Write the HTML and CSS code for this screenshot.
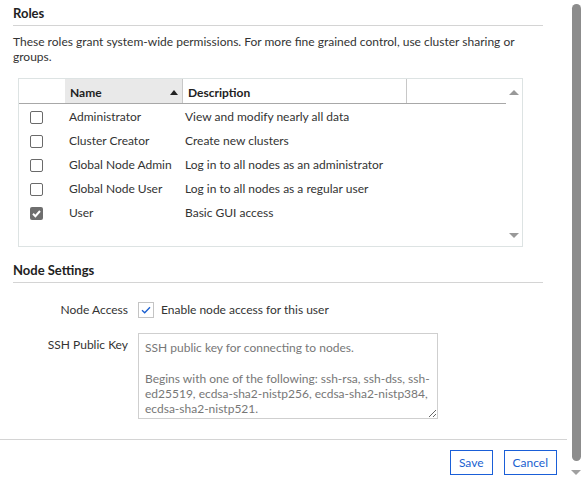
FILE: index.html
```html
<!DOCTYPE html>
<html>
<head>
<meta charset="utf-8">
<link rel="stylesheet" href="styles.css">
</head>
<body>
<div class="page">
  <h2 class="section-title">Roles</h2>
  <p class="desc">These roles grant system-wide permissions. For more fine grained control, use cluster sharing or groups.</p>
  <div class="grid">
    <div class="grid-main">
      <div class="grid-head">
        <div class="col-check"></div>
        <div class="col-name sorted"><span>Name</span><span class="sort-up"></span></div>
        <div class="col-desc">Description</div>
        <div class="col-extra"></div>
      </div>
      <div class="grid-body">
        <div class="grid-row"><div class="col-check"><span class="cb"></span></div><div class="col-name">Administrator</div><div class="col-desc">View and modify nearly all data</div></div>
        <div class="grid-row"><div class="col-check"><span class="cb"></span></div><div class="col-name">Cluster Creator</div><div class="col-desc">Create new clusters</div></div>
        <div class="grid-row"><div class="col-check"><span class="cb"></span></div><div class="col-name">Global Node Admin</div><div class="col-desc">Log in to all nodes as an administrator</div></div>
        <div class="grid-row"><div class="col-check"><span class="cb"></span></div><div class="col-name">Global Node User</div><div class="col-desc">Log in to all nodes as a regular user</div></div>
        <div class="grid-row"><div class="col-check"><span class="cb cb-checked"><svg viewBox="0 0 13 13" width="13" height="13"><path d="M3 6.8 L5.4 9.2 L10 4" fill="none" stroke="#fff" stroke-width="2"/></svg></span></div><div class="col-name">User</div><div class="col-desc">Basic GUI access</div></div>
      </div>
    </div>
    <div class="grid-scroll">
      <span class="tri-up"></span>
      <span class="tri-down"></span>
    </div>
  </div>

  <h2 class="section-title section-second">Node Settings</h2>
  <div class="form-row row-access">
    <label class="form-label">Node Access</label>
    <div class="form-field">
      <span class="cb-big"><svg viewBox="0 0 16 16" width="16" height="16"><path d="M4 8.2 L6.7 10.8 L12 5.2" fill="none" stroke="#1a5fd0" stroke-width="1.3"/></svg></span>
      <span class="cb-text">Enable node access for this user</span>
    </div>
  </div>
  <div class="form-row row-ssh">
    <label class="form-label label-top">SSH Public Key</label>
    <textarea class="ssh" placeholder="SSH public key for connecting to nodes.&#10;&#10;Begins with one of the following: ssh-rsa, ssh-dss, ssh-ed25519, ecdsa-sha2-nistp256, ecdsa-sha2-nistp384, ecdsa-sha2-nistp521."></textarea>
  </div>
  <div class="footer">
    <button class="btn">Save</button>
    <button class="btn">Cancel</button>
  </div>
</div>
<div class="vscroll">
  <div class="vthumb"></div>
  <span class="vtri-down"></span>
</div>
</body>
</html>
```
FILE: styles.css
```css
html, body {
  margin: 0;
  padding: 0;
  background: #fff;
}
body {
  display: flex;
  width: 581px;
  height: 486px;
  overflow: hidden;
  font-family: "Lato", "Segoe UI", sans-serif;
  font-size: 12px;
  color: #333;
}
.page {
  width: 571px;
  flex: none;
}
.section-title {
  margin: 0 28px 0 13px;
  padding: 5px 0 4px;
  font-size: 13px;
  line-height: 16px;
  font-weight: bold;
  color: #222;
  border-bottom: 1px solid #d4d4d4;
}
.section-second {
  margin-top: 10px;
}
.desc {
  margin: 8px 28px 0 13px;
  line-height: 15px;
}
.grid {
  margin: 14px 0 0 18px;
  width: 503px;
  height: 167px;
  border: 1px solid #dde3e3;
  display: flex;
}
.grid-main {
  flex: 1;
}
.grid-head {
  display: flex;
  height: 24px;
  border-bottom: 1px solid #a8a8a8;
  font-weight: bold;
  color: #222;
}
.grid-head > div {
  padding-top: 6px;
  line-height: 16px;
  box-sizing: border-box;
}
.col-check {
  width: 46px;
  flex: none;
}
.col-name {
  width: 117px;
  flex: none;
  padding-left: 5px;
  box-sizing: border-box;
}
.col-desc {
  width: 224px;
  flex: none;
  padding-left: 3px;
  box-sizing: border-box;
}
.grid-head .col-desc {
  border-left: 1px solid #c8c8c8;
  padding-left: 5px;
}
.col-extra {
  flex: 1;
  border-left: 1px solid #c8c8c8;
}
.grid-head .col-name {
  background: #e9e9e9;
  display: flex;
  justify-content: space-between;
  padding-right: 4px;
}
.sort-up {
  width: 0;
  height: 0;
  margin-top: 5px;
  border-left: 4px solid transparent;
  border-right: 4px solid transparent;
  border-bottom: 5px solid #222;
}
.grid-body {
  padding-top: 1px;
}
.grid-row {
  display: flex;
  height: 24px;
  line-height: 24px;
}
.grid-row .col-name {
  padding-left: 4px;
}
.grid-row .col-check {
  display: flex;
  align-items: center;
  padding-left: 11px;
  box-sizing: border-box;
}
.cb {
  width: 11px;
  height: 11px;
  border: 1px solid #6a6a6a;
  border-radius: 2px;
  background: #fff;
  display: block;
}
.cb-checked {
  width: 13px;
  height: 13px;
  border: none;
  background: #6e6e6e;
}
.cb-checked svg {
  display: block;
}
.grid-scroll {
  width: 16px;
  flex: none;
  display: flex;
  flex-direction: column;
  justify-content: space-between;
  align-items: center;
  padding: 11px 0 8px;
  box-sizing: border-box;
}
.tri-up {
  width: 0;
  height: 0;
  border-left: 5px solid transparent;
  border-right: 5px solid transparent;
  border-bottom: 5px solid #999;
}
.tri-down {
  width: 0;
  height: 0;
  border-left: 5px solid transparent;
  border-right: 5px solid transparent;
  border-top: 5px solid #999;
}
.form-row {
  display: flex;
  align-items: flex-start;
}
.row-access {
  margin-top: 19px;
  height: 16px;
  align-items: center;
}
.row-ssh {
  margin-top: 15px;
}
.form-label {
  width: 128px;
  flex: none;
  padding-right: 10px;
  text-align: right;
  line-height: 16px;
  box-sizing: content-box;
}
.label-top {
  padding-top: 4px;
}
.form-field {
  display: flex;
  align-items: center;
}
.cb-big {
  width: 14px;
  height: 14px;
  border: 1px solid #c4c4c4;
  display: block;
}
.cb-big svg {
  display: block;
  margin: -1px 0 0 -1px;
}
.cb-text {
  margin-left: 7px;
  line-height: 16px;
}
.ssh {
  display: block;
  width: 300px;
  height: 86px;
  box-sizing: border-box;
  border: 1px solid #cfcfcf;
  border-radius: 0;
  padding: 6px 6px;
  margin: 0;
  font-family: inherit;
  font-size: 12px;
  line-height: 15.3px;
  color: #333;
  resize: both;
  outline: none;
}
.ssh::placeholder {
  color: #777;
  opacity: 1;
}
.footer {
  margin: 20px 4px 0 0;
  border-top: 1px solid #d4d4d4;
  padding: 10px 10px 0 0;
  display: flex;
  justify-content: flex-end;
  gap: 11px;
}
.btn {
  height: 25px;
  padding: 0 8px;
  border: 1px solid #1a5fd8;
  background: #fff;
  color: #1a5fd0;
  font-family: inherit;
  font-size: 12px;
  border-radius: 0;
  margin: 0;
}
.vscroll {
  width: 10px;
  flex: none;
  display: flex;
  flex-direction: column;
  align-items: center;
  padding-top: 4px;
  box-sizing: border-box;
}
.vthumb {
  width: 9px;
  height: 457px;
  background: #8c8c8c;
  border-radius: 5px;
}
.vtri-down {
  margin-top: 9px;
  width: 0;
  height: 0;
  border-left: 5px solid transparent;
  border-right: 5px solid transparent;
  border-top: 5px solid #a0a0a0;
}
```
